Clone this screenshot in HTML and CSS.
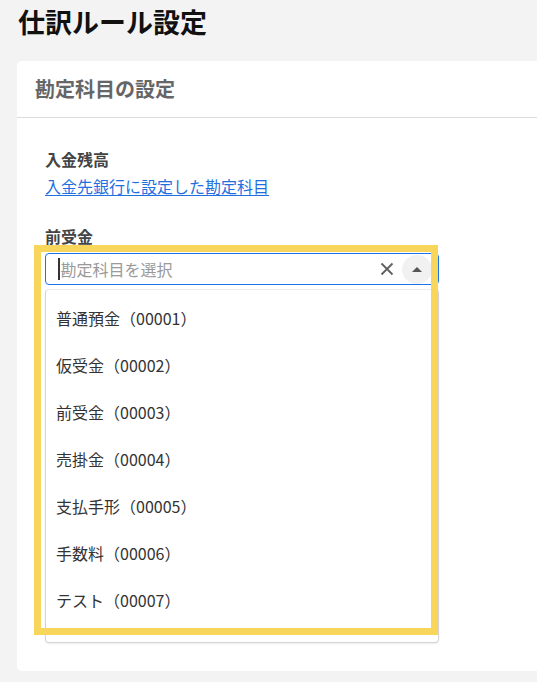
FILE: index.html
```html
<!DOCTYPE html>
<html lang="ja">
<head>
<meta charset="utf-8">
<title>仕訳ルール設定</title>
<link rel="stylesheet" href="styles.css">
</head>
<body>
<div class="page">
  <h1 class="title">仕訳ルール設定</h1>
  <section class="card">
    <div class="card-header">勘定科目の設定</div>
    <div class="card-body">
      <div class="label">入金残高</div>
      <a class="link" href="#">入金先銀行に設定した勘定科目</a>
      <div class="label label-field">前受金</div>
      <div class="field">
        <div class="select">
          <span class="caret"></span>
          <span class="placeholder">勘定科目を選択</span>
          <span class="clear">
            <svg width="14" height="14" viewBox="0 0 14 14"><path d="M1.5 1.5 L12.5 12.5 M12.5 1.5 L1.5 12.5" stroke="#5f5f5f" stroke-width="1.8" fill="none"/></svg>
          </span>
          <span class="toggle">
            <svg width="12" height="7" viewBox="0 0 12 7"><path d="M1 6 L6 1 L11 6 Z" fill="#555"/></svg>
          </span>
        </div>
        <ul class="menu">
          <li>普通預金（00001）</li>
          <li>仮受金（00002）</li>
          <li>前受金（00003）</li>
          <li>売掛金（00004）</li>
          <li>支払手形（00005）</li>
          <li>手数料（00006）</li>
          <li>テスト（00007）</li>
        </ul>
        <div class="highlight"></div>
      </div>
    </div>
  </section>
</div>
</body>
</html>
```
FILE: styles.css
```css
html, body {
  margin: 0;
  padding: 0;
  background: #f3f3f3;
  font-family: "Noto Sans CJK JP", "Noto Sans", sans-serif;
  color: #333;
}
.page {
  padding-left: 17px;
  overflow: hidden;
  height: 682px;
}
.title {
  margin: 0;
  font-size: 27px;
  font-weight: 700;
  line-height: 43px;
  height: 44px;
  color: #111;
  margin-bottom: 17px;
  padding-left: 1px;
}
.card {
  background: #fff;
  border-radius: 5px 0 0 5px;
}
.card-header {
  height: 56px;
  line-height: 56px;
  padding-left: 18px;
  font-size: 20px;
  font-weight: 700;
  color: #666;
  border-bottom: 1px solid #dcdcdc;
}
.card-body {
  padding: 29px 0 28px 28px;
}
.label {
  font-size: 16px;
  line-height: 24px;
  font-weight: 700;
  color: #444;
  margin-bottom: 3px;
}
.label-field {
  margin-top: 26px;
  margin-bottom: 5px;
}
.link {
  display: block;
  font-size: 16px;
  line-height: 24px;
  color: #1f6fdf;
  text-decoration: underline;
  text-underline-offset: 2px;
  width: max-content;
}
.field {
  position: relative;
  width: 394px;
}
.select {
  box-sizing: border-box;
  height: 32px;
  border: 1.5px solid #1a73e8;
  border-radius: 4px;
  display: flex;
  align-items: center;
  padding-left: 12px;
}
.caret {
  width: 1.5px;
  height: 22px;
  background: #333;
  margin-right: 1px;
}
.placeholder {
  flex: 1;
  font-size: 16px;
  color: #9a9a9a;
}
.clear {
  display: flex;
  align-items: center;
  justify-content: center;
  width: 20px;
  margin-right: 5px;
}
.toggle {
  display: flex;
  align-items: center;
  justify-content: center;
  width: 30px;
  height: 29px;
  border-radius: 50%;
  background: #f1f1f1;
  margin-right: 6px;
}
.menu {
  list-style: none;
  margin: 4px 0 0;
  padding: 5px 0 18px;
  border: 1px solid #d4d4d4;
  border-top-color: #ececec;
  border-radius: 4px;
  box-shadow: 0 1px 2px rgba(0,0,0,0.08);
}
.menu li {
  height: 47px;
  line-height: 47px;
  padding-left: 10px;
  font-size: 16px;
  color: #333;
}
.highlight {
  position: absolute;
  left: -11px;
  top: -8px;
  width: 404px;
  height: 390px;
  box-sizing: border-box;
  border: 7px solid #f8d65c;
  pointer-events: none;
}
```
